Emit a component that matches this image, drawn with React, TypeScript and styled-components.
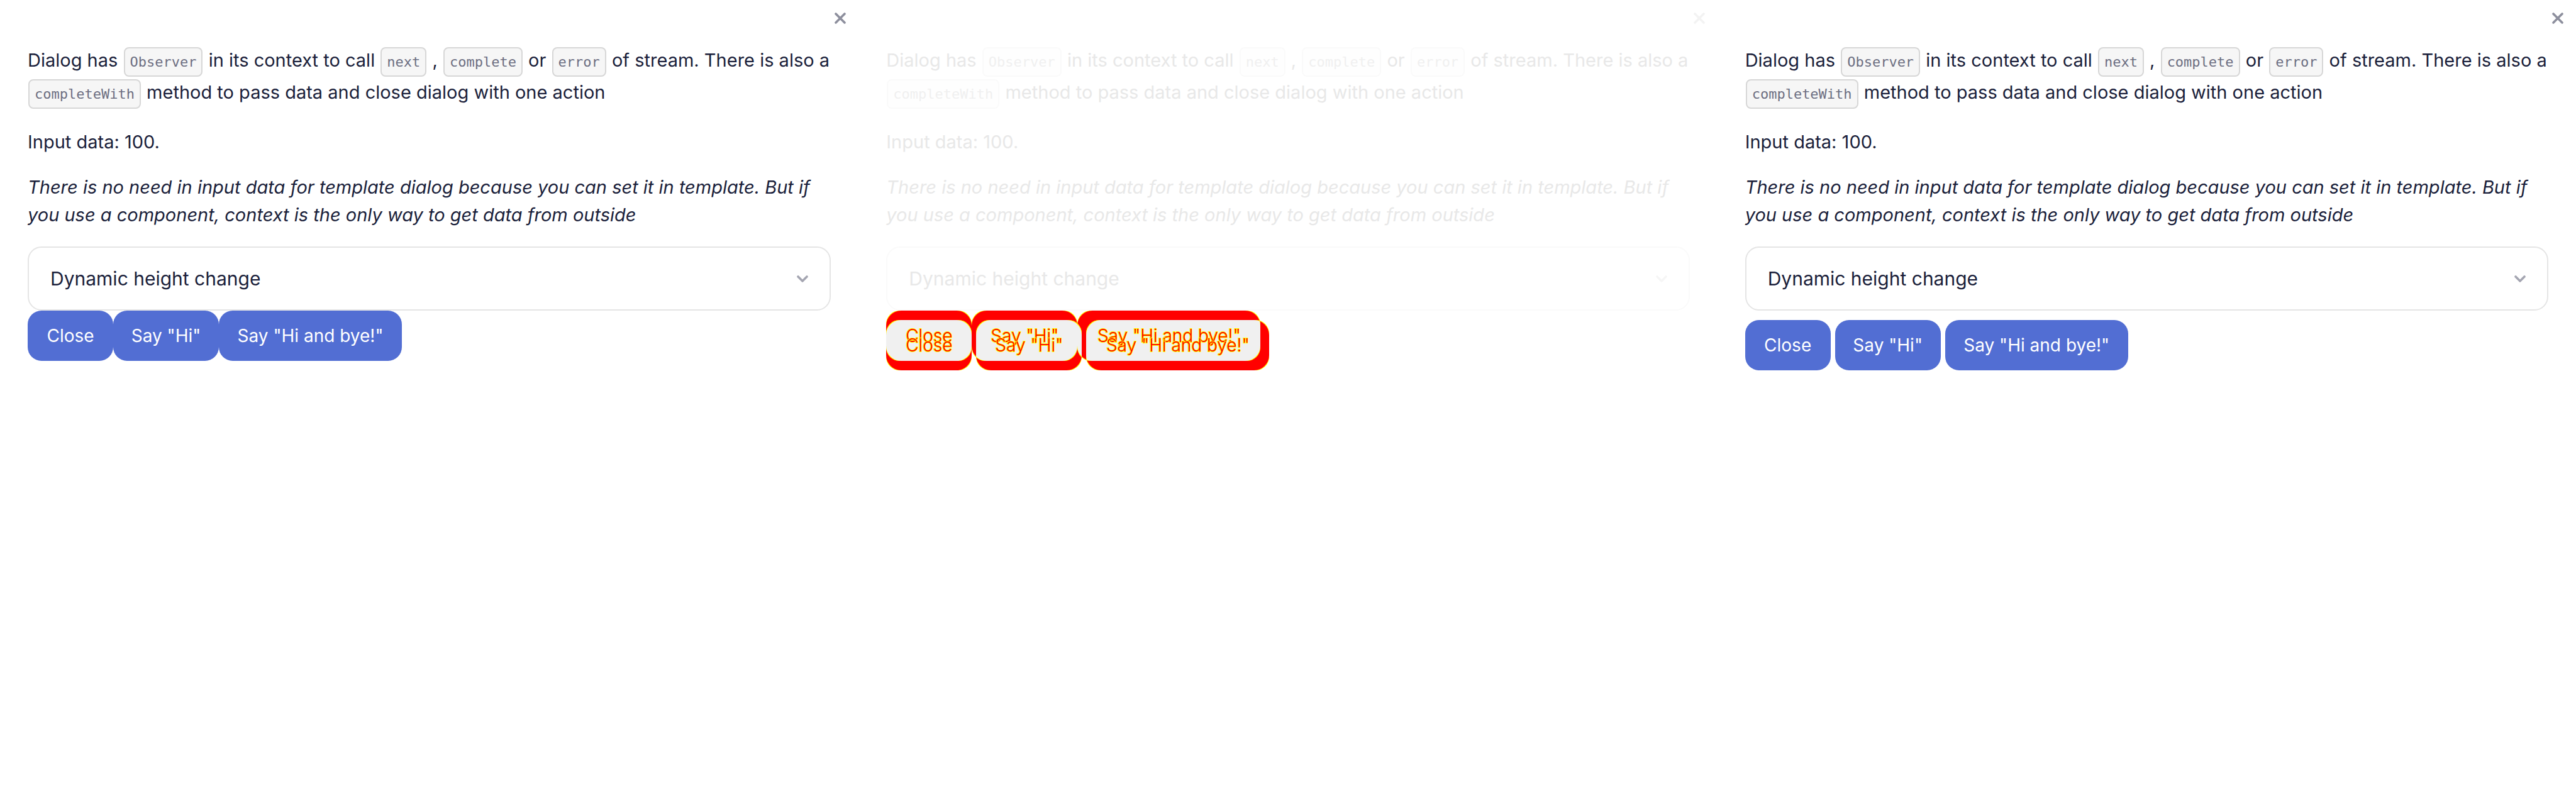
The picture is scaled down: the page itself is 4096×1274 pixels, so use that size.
import React from "react";
import styled, { createGlobalStyle, ThemeProvider } from "styled-components";

const GlobalStyle = createGlobalStyle`
  *, *::before, *::after { box-sizing: border-box; }
  body { margin: 0; background: #fff; }
`;

const solid = {
  text: "#1b1f3b",
  code: "#6d6f82",
  codeBg: "#f6f6f6",
  codeBorder: "#d7d7d7",
  border: "#e5e5e5",
  close: "#8d8f9d",
  chevron: "#a4a5b1",
};

const faded = {
  text: "#e8e8e8",
  code: "#f0f0f0",
  codeBg: "#fefefe",
  codeBorder: "#fafafa",
  border: "#fafafa",
  close: "#f3f3f3",
  chevron: "#f6f6f6",
};

const Board = styled.main`
  display: grid;
  grid-template-columns: repeat(3, minmax(0, 1fr));
  min-height: 100vh;
  font-family: Inter, "Liberation Sans", sans-serif;
  font-size: 29px;
  line-height: 44px;
`;

const Panel = styled.section`
  display: flex;
  flex-direction: column;
  padding: 7px 44px 0;
  color: ${(p) => p.theme.text};
`;

const CloseButton = styled.button`
  display: flex;
  align-items: center;
  justify-content: center;
  align-self: flex-end;
  width: 44px;
  height: 44px;
  margin-right: -37px;
  padding: 0;
  border: 0;
  background: none;
  color: ${(p) => p.theme.close};
`;

const Intro = styled.p`
  margin: 20px 0 3px;
  line-height: 49px;
`;

const Text = styled.p`
  margin: 28px 0 0;
`;

const Code = styled.code`
  display: inline-block;
  height: 47px;
  margin: 0 1px;
  padding: 0 8px;
  border: 2px solid ${(p) => p.theme.codeBorder};
  border-radius: 8px;
  background: ${(p) => p.theme.codeBg};
  color: ${(p) => p.theme.code};
  font: 22px/43px "DejaVu Sans Mono", monospace;
`;

const Accordion = styled.button`
  display: flex;
  align-items: center;
  justify-content: space-between;
  height: 102px;
  margin-top: 28px;
  padding: 0 34px;
  border: 2px solid ${(p) => p.theme.border};
  border-radius: 22px;
  background: none;
  color: inherit;
  font: inherit;
  font-size: 30px;
`;

const Chevron = styled.svg`
  color: ${(p) => p.theme.chevron};
`;

const Actions = styled.div<{ $spaced?: boolean }>`
  display: flex;
  gap: ${(p) => (p.$spaced ? 7 : 0)}px;
  padding-top: ${(p) => (p.$spaced ? 15 : 0)}px;
`;

const Action = styled.button<{ $width: number }>`
  width: ${(p) => p.$width}px;
  height: 80px;
  padding: 0;
  border: 0;
  border-radius: 22px;
  background: #526ed3;
  color: #fff;
  font: inherit;
  font-size: 28px;
  white-space: nowrap;
`;

const DiffAction = styled(Action)`
  background: none;
  color: #f00;
  font-weight: 300;
  paint-order: stroke fill;
  -webkit-text-stroke: 2px #ff0;
`;

const DiffArea = styled.div`
  position: relative;
`;

const DiffDrawing = styled.svg`
  position: absolute;
  top: 0;
  left: 0;
`;

const DiffOverlay = styled.div`
  position: absolute;
  top: 0;
  left: 0;
`;

const DiffBase = styled.div`
  position: relative;
`;

const actions = [
  { label: "Close", width: 136 },
  { label: 'Say "Hi"', width: 168 },
  { label: 'Say "Hi and bye!"', width: 291 },
];

type Box = { x: number; y: number; width: number };

const boxes = (gap: number, y: number): Box[] => {
  let x = 0;
  return actions.map(({ width }) => {
    const box = { x, y, width };
    x += width + gap;
    return box;
  });
};

const before = boxes(0, 0);
const after = boxes(7, 15);

function Shapes({ list, fill, radius }: { list: Box[]; fill?: string; radius: number }) {
  return (
    <>
      {list.map((b) => (
        <rect key={b.x} x={b.x} y={b.y} width={b.width} height={80} rx={radius} fill={fill} />
      ))}
    </>
  );
}

function Difference() {
  return (
    <DiffArea>
      <DiffDrawing width="620" height="96" aria-hidden="true">
        <clipPath id="edge">
          <Shapes list={after} radius={21} />
        </clipPath>
        <clipPath id="inner">
          <Shapes list={after} radius={24} />
        </clipPath>
        <Shapes list={before} fill="#ff0" radius={21} />
        <Shapes list={before} fill="#f00" radius={24} />
        <Shapes list={after} fill="#ff0" radius={21} />
        <Shapes list={after} fill="#f00" radius={24} />
        <g clipPath="url(#edge)">
          <Shapes list={before} fill="#ff0" radius={21} />
        </g>
        <g clipPath="url(#inner)">
          <Shapes list={before} fill="#f0f0f0" radius={24} />
        </g>
      </DiffDrawing>
      <DiffBase>
        <Actions>
          {actions.map((a) => (
            <DiffAction key={a.label} $width={a.width}>{a.label}</DiffAction>
          ))}
        </Actions>
      </DiffBase>
      <DiffOverlay>
        <Actions $spaced>
          {actions.map((a) => (
            <DiffAction key={a.label} $width={a.width}>{a.label}</DiffAction>
          ))}
        </Actions>
      </DiffOverlay>
    </DiffArea>
  );
}

function DialogPanel({ theme, children }: { theme: typeof solid; children: React.ReactNode }) {
  return (
    <ThemeProvider theme={theme}>
      <Panel>
        <CloseButton aria-label="Close dialog">
          <svg width="18" height="18" viewBox="0 0 18 18" fill="none" stroke="currentColor" strokeWidth="3.6" strokeLinecap="round">
            <path d="M2 2 16 16M16 2 2 16" />
          </svg>
        </CloseButton>
        <Intro>
          Dialog has <Code>Observer</Code> in its context to call <Code>next</Code> , <Code>complete</Code> or{" "}
          <Code>error</Code> of stream. There is also a <Code>completeWith</Code> method to pass data and close dialog
          with one action
        </Intro>
        <Text>Input data: 100.</Text>
        <Text>
          <em>
            There is no need in input data for template dialog because you can set it in template. But if you use a
            component, context is the only way to get data from outside
          </em>
        </Text>
        <Accordion aria-expanded="false">
          Dynamic height change
          <Chevron width="18" height="11" viewBox="0 0 18 11" fill="none" stroke="currentColor" strokeWidth="3.6" strokeLinecap="round" strokeLinejoin="round">
            <path d="M2 2 9 9 16 2" />
          </Chevron>
        </Accordion>
        {children}
      </Panel>
    </ThemeProvider>
  );
}

function ActionRow({ spaced }: { spaced?: boolean }) {
  return (
    <Actions $spaced={spaced}>
      {actions.map((a) => (
        <Action key={a.label} $width={a.width}>{a.label}</Action>
      ))}
    </Actions>
  );
}

export default function App() {
  return (
    <>
      <GlobalStyle />
      <Board>
        <DialogPanel theme={solid}>
          <ActionRow />
        </DialogPanel>
        <DialogPanel theme={faded}>
          <Difference />
        </DialogPanel>
        <DialogPanel theme={solid}>
          <ActionRow spaced />
        </DialogPanel>
      </Board>
    </>
  );
}
